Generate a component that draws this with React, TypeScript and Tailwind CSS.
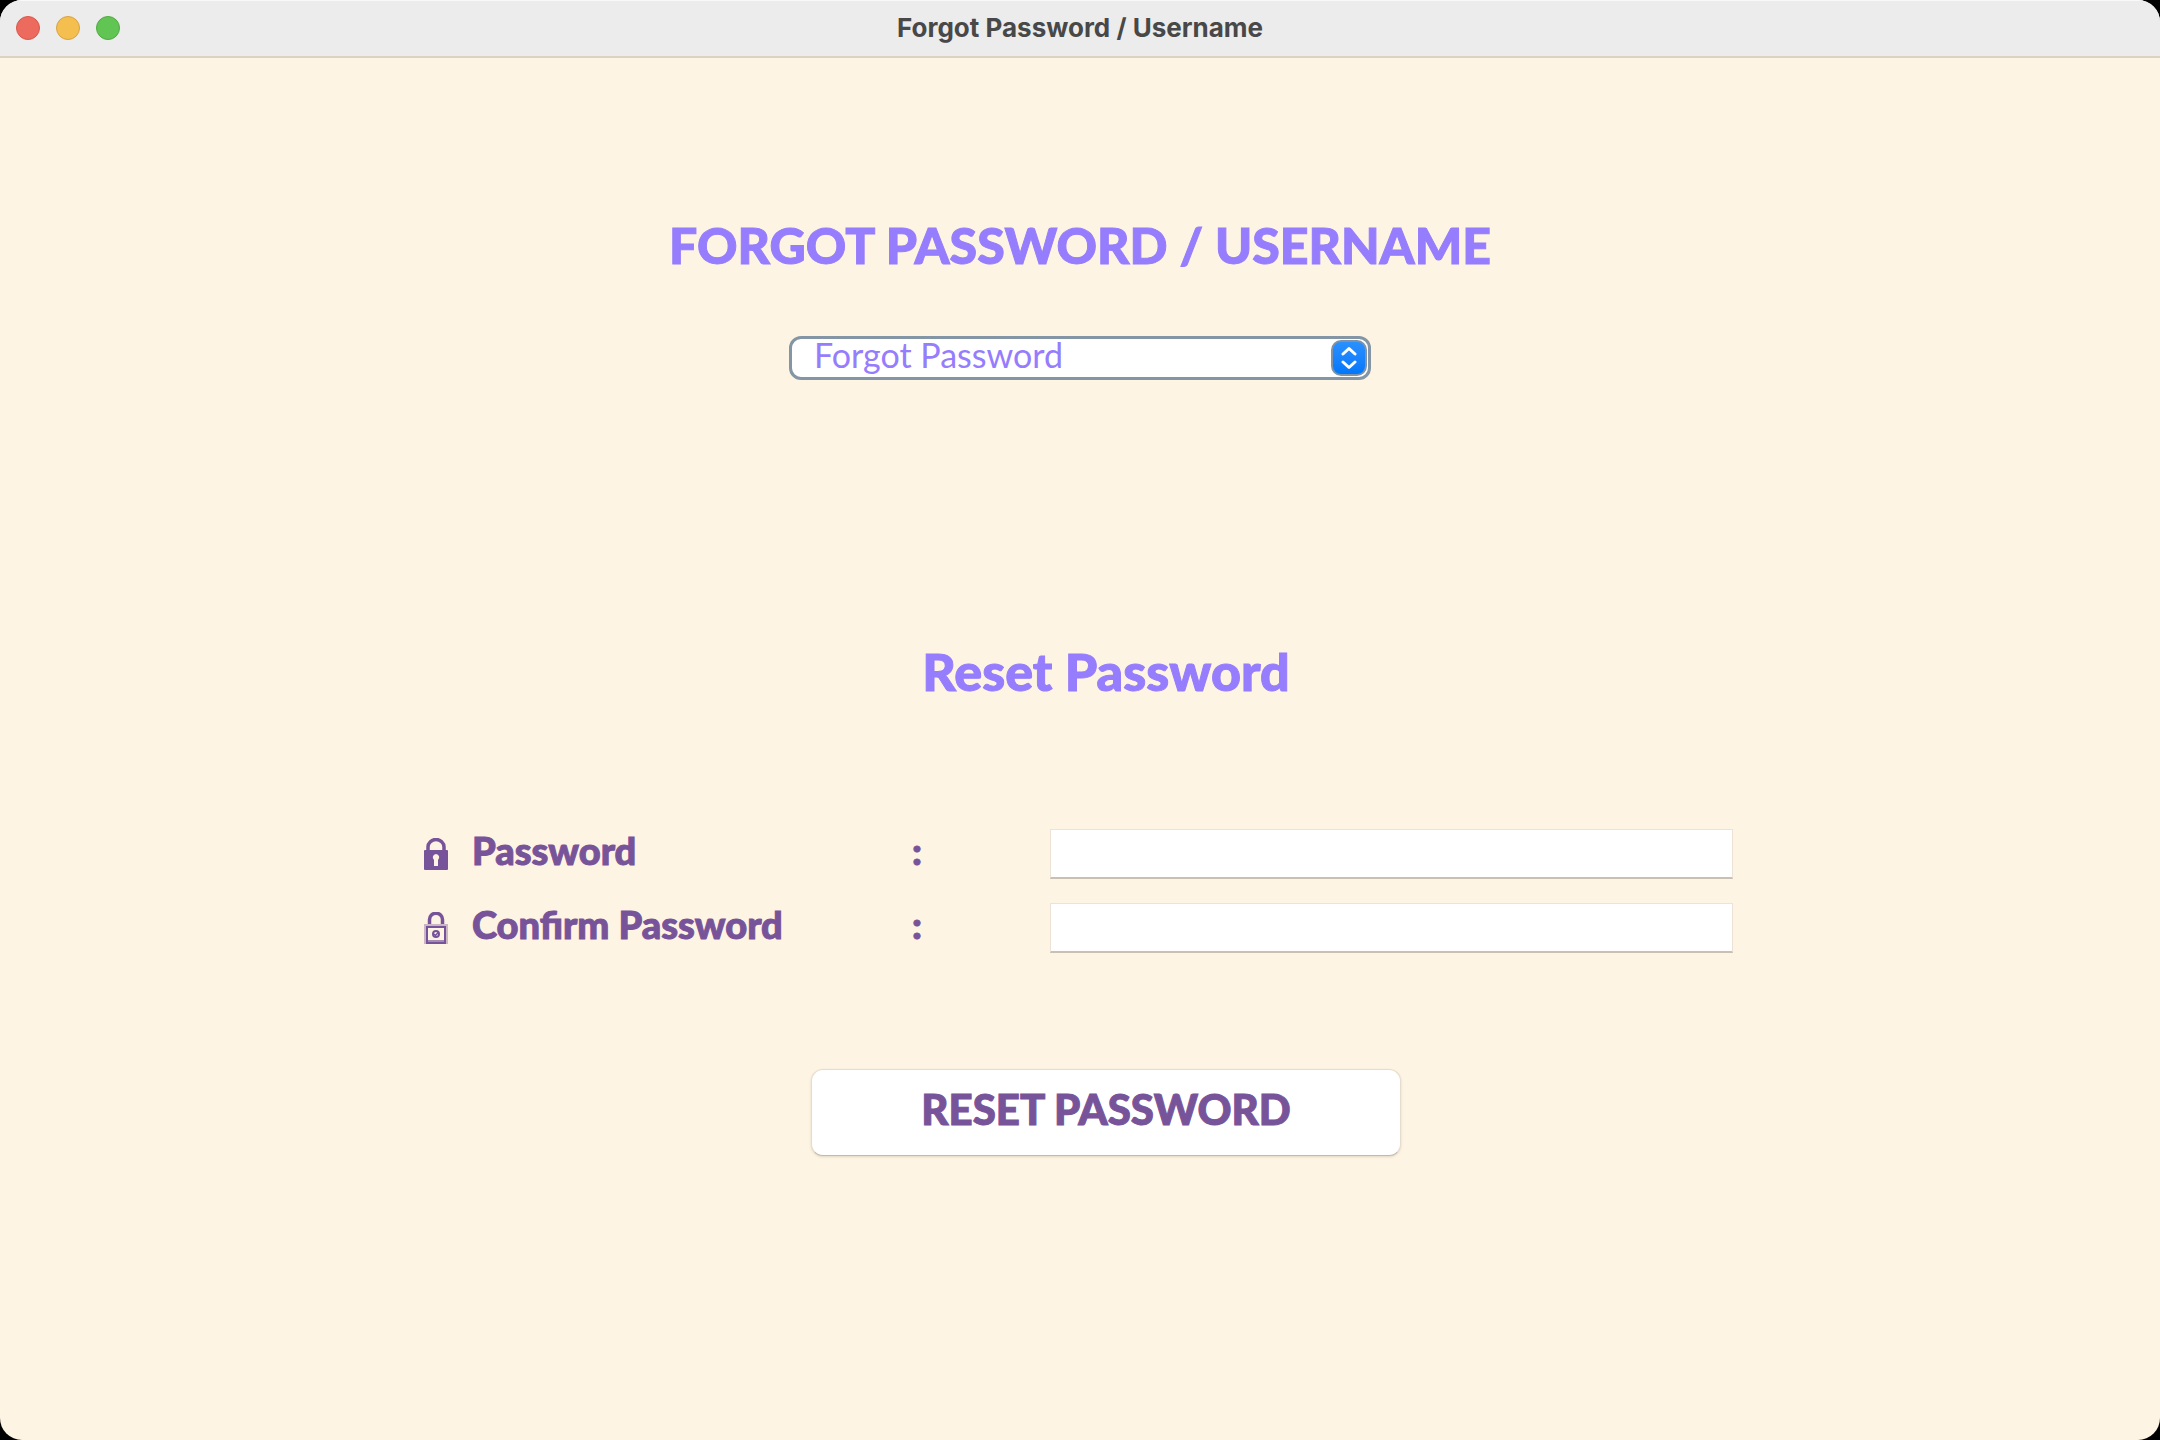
import { useState } from "react";

function LockSolid() {
  return (
    <svg viewBox="0 0 24 32" className="h-8 w-6" aria-hidden="true">
      <path d="M4 13V9a8 7.5 0 0 1 16 0v4" fill="none" stroke="#775399" strokeWidth="3.500" />
      <path
        fillRule="evenodd"
        fill="#775399"
        d="M1 12h22a1 1 0 0 1 1 1v18a1 1 0 0 1-1 1H1a1 1 0 0 1-1-1V13a1 1 0 0 1 1-1ZM12 16a3.4 3.4 0 0 0-2 6v6h4v-6a3.4 3.4 0 0 0-2-6Z"
      />
    </svg>
  );
}

function LockOutline() {
  return (
    <svg viewBox="0 0 24 32" className="h-8 w-6" aria-hidden="true">
      <path d="M5.500 12V7.500a6.500 6.300 0 0 1 13 0V12" fill="none" stroke="#775399" strokeWidth="3.500" />
      <rect x="1" y="13" width="22" height="18" fill="none" stroke="#cbb7c4" strokeWidth="2" />
      <rect x="3" y="15" width="18" height="16" fill="none" stroke="#775399" strokeWidth="2" />
      <path d="M4 29h16" stroke="#a68bb4" strokeWidth="2" />
      <circle cx="12" cy="22" r="3" fill="none" stroke="#775399" strokeWidth="2" />
      <path d="m10 22 1.500 1.500 3-3.500" fill="none" stroke="#775399" strokeWidth="1.500" />
    </svg>
  );
}

const fields = [
  { id: "password", label: "Password", Icon: LockSolid },
  { id: "confirm-password", label: "Confirm Password", Icon: LockOutline },
];

export default function App() {
  const [mode, setMode] = useState("Forgot Password");

  return (
    <div className="min-h-screen bg-black font-['Lato',sans-serif]">
      <div className="flex min-h-screen flex-col overflow-hidden rounded-[22px] bg-[#fef4e3]">
        <header className="grid h-[58px] grid-cols-[1fr_auto_1fr] items-center border-t border-b-2 border-t-[#f8f8f8] border-b-[#dcd2c2] bg-[#ececec] px-4 pb-[2px]">
          <div className="flex gap-4">
            <button aria-label="Close" className="size-6 rounded-full border border-[#d9574b] bg-[#ec6a5e]" />
            <button aria-label="Minimize" className="size-6 rounded-full border border-[#d6a243] bg-[#f4bf4f]" />
            <button aria-label="Zoom" className="size-6 rounded-full border border-[#52a842] bg-[#61c554]" />
          </div>
          <span className="font-['Inter',sans-serif] text-[26px] leading-8 font-bold text-[#484848]">
            Forgot Password / Username
          </span>
        </header>

        <main className="flex flex-col items-center px-8">
          <h1 className="mt-[157px] text-center text-[50px] leading-[60px] font-black text-[#957dfd] [-webkit-text-stroke:1px_#957dfd]">
            FORGOT PASSWORD / USERNAME
          </h1>

          <div className="relative mt-[61px] h-11 w-full max-w-[582px] rounded-xl border-3 border-[#8496a6] bg-white">
            <select
              aria-label="Recovery option"
              value={mode}
              onChange={(e) => setMode(e.target.value)}
              className="-mt-1.5 block h-11 w-full appearance-none bg-transparent pl-[22px] text-[34px] leading-[42px] text-[#957dfd] outline-none"
            >
              <option>Forgot Password</option>
              <option>Forgot Username</option>
            </select>
            <span className="pointer-events-none absolute top-px right-px flex size-9 items-center justify-center rounded-[10px] border-2 border-[#7f93a8] bg-linear-to-b from-[#2a90ff] to-[#0077fb]">
              <svg viewBox="0 0 16 24" className="h-6 w-4" aria-hidden="true">
                <path
                  d="m2 8 6-5.500L14 8M2 16l6 5.500 6-5.500"
                  fill="none"
                  stroke="white"
                  strokeWidth="3"
                  strokeLinecap="round"
                  strokeLinejoin="round"
                />
              </svg>
            </span>
          </div>

          <form className="mt-[261px] flex w-full max-w-[1312px] flex-col" onSubmit={(e) => e.preventDefault()}>
            <h2 className="pl-[52px] text-center text-[52px] leading-[60px] font-black text-[#957dfd] [-webkit-text-stroke:1px_#957dfd]">
              Reset Password
            </h2>

            <div className="mt-32 flex flex-col gap-6 pr-[3px]">
              {fields.map(({ id, label, Icon }) => (
                <div
                  key={id}
                  className="flex h-[50px] items-center text-[38px] leading-[42px] font-black text-[#775399] [-webkit-text-stroke:1px_#775399]"
                >
                  <Icon />
                  <label htmlFor={id} className="w-[440px] pb-2 pl-6">
                    {label}
                  </label>
                  <span className="w-[162px] pb-2 pl-6">:</span>
                  <input
                    id={id}
                    type="password"
                    className="h-full min-w-0 flex-1 border border-b-2 border-[#ebe2d8] border-b-[#c9bfb3] bg-white px-3 outline-none"
                  />
                </div>
              ))}
            </div>

            <div className="mt-[116px] flex justify-center pl-[52px]">
              <button
                type="submit"
                className="h-[87px] w-full max-w-[590px] rounded-xl border border-[#e6dccd] border-b-[#c4b9aa] bg-white pb-2 text-[42px] leading-[48px] font-black text-[#775399] shadow-sm [-webkit-text-stroke:1px_#775399]"
              >
                RESET PASSWORD
              </button>
            </div>
          </form>
        </main>
      </div>
    </div>
  );
}
